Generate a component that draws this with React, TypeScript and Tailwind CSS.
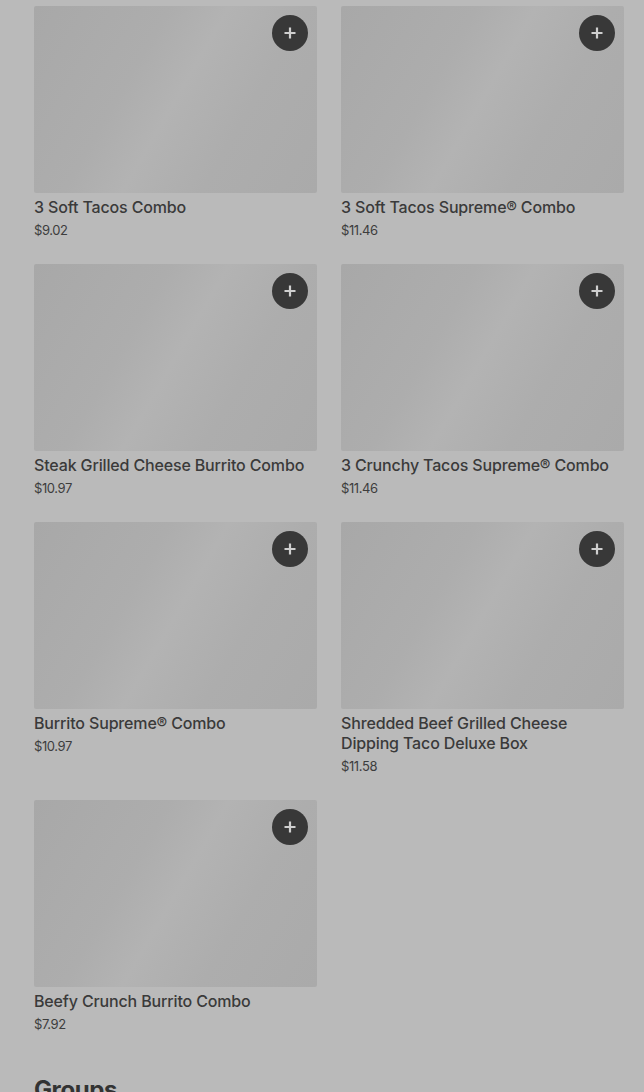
import React from "react";

type Item = { name: string; price: string };

const items: Item[] = [
  { name: "3 Soft Tacos Combo", price: "$9.02" },
  { name: "3 Soft Tacos Supreme® Combo", price: "$11.46" },
  { name: "Steak Grilled Cheese Burrito Combo", price: "$10.97" },
  { name: "3 Crunchy Tacos Supreme® Combo", price: "$11.46" },
  { name: "Burrito Supreme® Combo", price: "$10.97" },
  { name: "Shredded Beef Grilled Cheese Dipping Taco Deluxe Box", price: "$11.58" },
  { name: "Beefy Crunch Burrito Combo", price: "$7.92" },
];

function Card({ item }: { item: Item }) {
  return (
    <div className="flex flex-col">
      <div className="relative h-[187px] w-full rounded-[2px] bg-[linear-gradient(120deg,#a8a8a8_0%,#adadad_35%,#b3b3b3_50%,#adadad_70%,#aaaaaa_100%)]">
        <button className="absolute right-[9px] top-[9px] flex h-[36px] w-[36px] items-center justify-center rounded-full bg-[#383838]">
          <svg width="12" height="12" viewBox="0 0 12 12">
            <path d="M6 0.5v11M0.5 6h11" stroke="#cfcfcf" strokeWidth="2.2" strokeLinecap="butt" />
          </svg>
        </button>
      </div>
      <div className="mt-[4px] text-[16px] leading-[20px] font-medium tracking-[-0.15px] text-[#3a3a3a]">
        {item.name}
      </div>
      <div className="mt-[4px] text-[13px] leading-[18px] tracking-[-0.4px] text-[#3d3d3d]">
        {item.price}
      </div>
    </div>
  );
}

export default function App() {
  return (
    <div
      className="h-[1092px] w-[644px] overflow-hidden bg-[#bababa] pl-[34px] pt-[6px]"
      style={{ fontFamily: "Inter, 'Noto Sans', sans-serif" }}
    >
      <div className="grid grid-cols-[283px_283px] gap-x-[24px] gap-y-[25px]">
        {items.map((it) => (
          <Card key={it.name} item={it} />
        ))}
      </div>
      <h2 className="mt-[42px] text-[24px] leading-[30px] font-bold tracking-[-0.4px] text-[#333333]">
        Groups
      </h2>
    </div>
  );
}
